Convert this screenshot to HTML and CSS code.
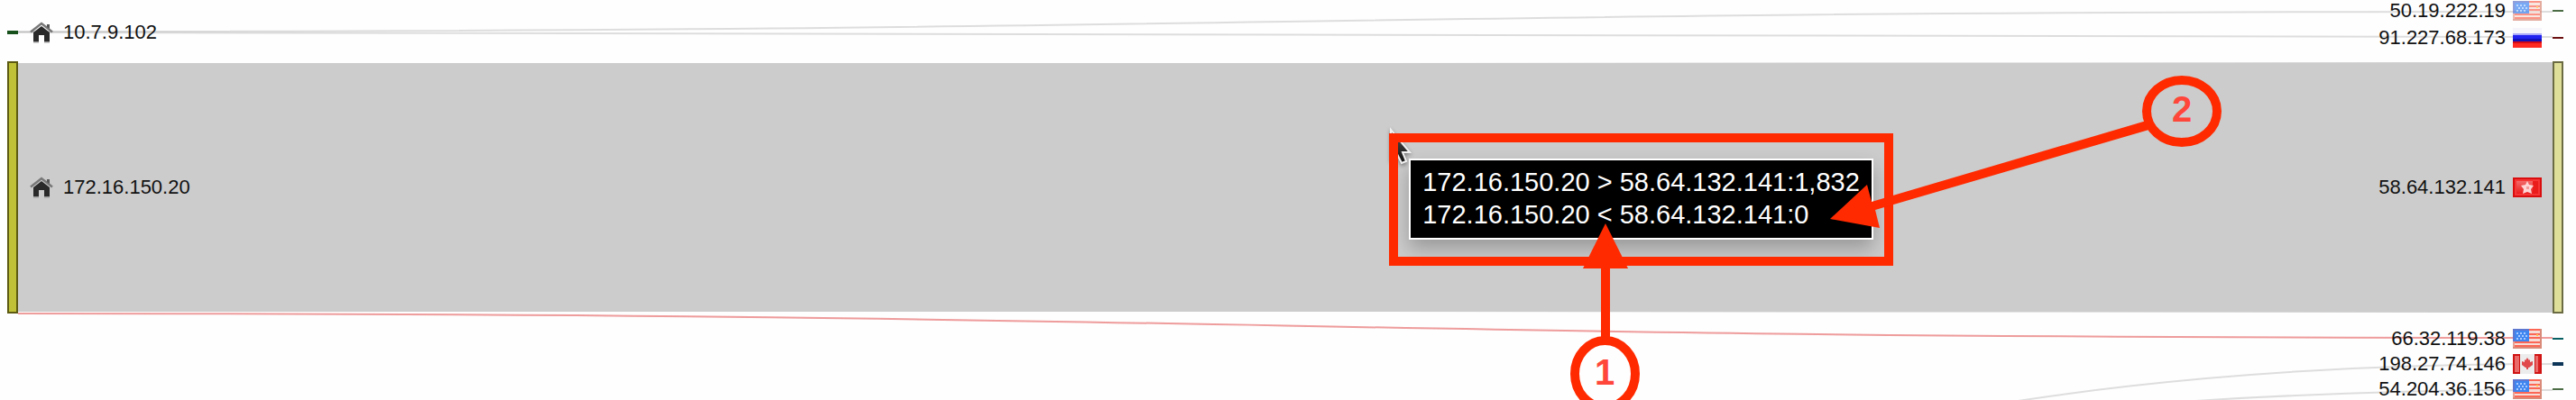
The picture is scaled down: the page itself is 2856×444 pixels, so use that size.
FILE: index.html
```html
<!DOCTYPE html>
<html lang="en">
<head>
<meta charset="utf-8">
<title>Network flows</title>
<link rel="stylesheet" href="styles.css">
</head>
<body>
<svg class="symbols" aria-hidden="true">
  <defs>
    <linearGradient id="gloss" x1="0" y1="0" x2="0" y2="1">
      <stop offset="0" stop-color="#fff" stop-opacity=".35"/>
      <stop offset="1" stop-color="#fff" stop-opacity="0"/>
    </linearGradient>
    <linearGradient id="cursor-fill" x1="0" y1="0" x2="0" y2="1">
      <stop offset="0" stop-color="#555"/>
      <stop offset="1" stop-color="#111"/>
    </linearGradient>
  </defs>
  <symbol id="home" viewBox="0 0 28 24">
    <path d="M2 11.500 L14 2 L26 11.500" fill="none" stroke="#777" stroke-width="2.500"/>
    <path d="M20 3h3v5l-3-2z" fill="#555"/>
    <path d="M5 12 L14 5 L23 12 V23 H17 V15 H11 V23 H5Z" fill="#2a2a2a"/>
    <path d="M5 22h6v1.500H5zM17 22h6v1.500h-6z" fill="#999"/>
  </symbol>
  <symbol id="us" viewBox="0 0 32 22">
    <path d="M0 0h32v22H0z" fill="#f6dcd6"/>
    <path d="M18 0h14v2H18zM18 5h12v2H18zM18 9h12v2H18zM2 14h28v2H2zM0 18h32v4H0z" fill="#fb6655"/>
    <path d="M0 20h32v2H0zM30 0h2v22h-2z" fill="#d98a78"/>
    <path d="M0 14h2v6H0z" fill="#e9a394"/>
    <path d="M0 0h18v14H0z" fill="#5f78cf"/>
    <path d="M2 2h16v12H2z" fill="#3f86f0"/>
    <path d="M4 4h2v2H4zM8 4h2v2H8zM12 4h2v2h-2zM6 7h2v2H6zM10 7h2v2h-2zM14 7h2v2h-2zM4 10h2v2H4zM8 10h2v2H8zM12 10h2v2h-2z" fill="#a9cbff"/>
    <path d="M26 6h2v2h-2z" fill="#ffc04a"/>
  </symbol>
  <symbol id="ru" viewBox="0 0 32 22">
    <path d="M0 0h32v7H0z" fill="#f5f5fb"/>
    <path d="M0 6h32v10H0z" fill="#2222f0"/>
    <path d="M0 6h32v2H0z" fill="#aaaafa"/>
    <path d="M0 12h32v3H0z" fill="#1212b8"/>
    <path d="M0 15h32v7H0z" fill="#ff2b22"/>
    <path d="M0 15h32v2H0z" fill="#d40a18"/>
  </symbol>
  <symbol id="hk" viewBox="0 0 32 22">
    <path d="M0 0h32v22H0z" fill="#d90d0d"/>
    <path d="M2 2h28v18H2z" fill="#f63535"/>
    <path d="M4 4h24v14H4z" fill="#ea1c1c"/>
    <path d="M4 4h18v14H4z" fill="url(#gloss)"/>
    <path d="M16 4l2 4 5 1-3 4 1 5-5-2-5 2 1-5-3-4 5-1z" fill="#ffd5d5"/>
    <path d="M15 10h3v3h-3z" fill="#f49a9a"/>
  </symbol>
  <symbol id="ca" viewBox="0 0 32 22">
    <path d="M0 0h32v22H0z" fill="#ececec"/>
    <path d="M0 0h8v22H0zM24 0h8v22h-8z" fill="#cf1212"/>
    <path d="M2 2h5v18H2zM25 2h5v18h-5z" fill="#ea6a6a"/>
    <path d="M28 2h2v18h-2z" fill="#d92020"/>
    <path d="M16 4l2 3 1-1v3l3-1v4l-4 3h-1v2h-2v-2h-1l-4-3V8l3 1V6l1 1z" fill="#e0484c"/>
  </symbol>
</svg>

<main class="chart">
  <svg class="links" viewBox="0 0 2810 444" preserveAspectRatio="none" aria-hidden="true">
    <path class="link" d="M0 35 C1405 35 1405 13 2810 13"/>
    <path class="link" d="M0 36 C1405 36 1405 41 2810 41"/>
    <path class="band" d="M0 70H1405L2810 69V347L1405 346H0Z"/>
    <path class="link link-alert" d="M0 348 C1405 348 1405 375 2810 375"/>
    <path class="link" d="M0 969 C1405 969 1405 404 2810 404"/>
    <path class="link" d="M0 830 C1405 830 1405 433 2810 433"/>
  </svg>

  <section class="column sources" aria-label="Sources">
    <div class="node"><i class="bar bar-green"></i><svg class="home"><use href="#home"/></svg><span>10.7.9.102</span></div>
    <div class="node node-large"><i class="bar bar-olive"></i><svg class="home"><use href="#home"/></svg><span>172.16.150.20</span></div>
  </section>

  <section class="column targets" aria-label="Destinations">
    <div class="node node-top"><span>50.19.222.19</span><svg class="flag faded"><use href="#us"/></svg><i class="bar bar-moss"></i></div>
    <div class="node node-second"><span>91.227.68.173</span><svg class="flag"><use href="#ru"/></svg><i class="bar bar-maroon"></i></div>
    <div class="node node-large"><span>58.64.132.141</span><svg class="flag"><use href="#hk"/></svg><i class="bar bar-cream"></i></div>
    <div class="node node-after"><span>66.32.119.38</span><svg class="flag"><use href="#us"/></svg><i class="bar bar-teal"></i></div>
    <div class="node node-next"><span>198.27.74.146</span><svg class="flag"><use href="#ca"/></svg><i class="bar bar-navy"></i></div>
    <div class="node node-next"><span>54.204.36.156</span><svg class="flag"><use href="#us"/></svg><i class="bar bar-moss"></i></div>
  </section>

  <div class="tooltip" role="tooltip">
    <div>172.16.150.20 &gt; 58.64.132.141:1,832</div>
    <div>172.16.150.20 &lt; 58.64.132.141:0</div>
  </div>

  <svg class="notes" viewBox="0 0 2856 444">
    <path class="cursor" d="M1542 144V177L1549 171L1554 181L1559 179L1555 169H1563Z"/>
    <path class="mark" d="M1540 148H2099V295H1540ZM1550 158V285H2089V158Z" fill-rule="evenodd"/>
    <path class="mark" d="M1780 248L1805 298H1785V378H1775V298H1755Z"/>
    <path class="mark" d="M2029 243L2070 205L2075 224L2383 133L2386 143L2079 233L2084 253Z"/>
    <ellipse class="ring" cx="1779.500" cy="415" rx="33.500" ry="37"/>
    <ellipse class="ring" cx="2419" cy="123.500" rx="39" ry="34.500"/>
    <text class="number" x="1779" y="427">1</text>
    <text class="number" x="2419" y="135">2</text>
  </svg>
</main>
</body>
</html>
```
FILE: styles.css
```css
body {
  margin: 0;
  background: #fefefe;
  color: #111;
  font: 22px/24px "Liberation Sans", Arial, sans-serif;
}

.symbols {
  position: absolute;
  width: 0;
  height: 0;
}

.chart {
  position: relative;
  display: flex;
  justify-content: space-between;
  padding: 0 14px 0 8px;
  overflow: hidden;
}

.column {
  position: relative;
  display: flex;
  flex-direction: column;
}

.node {
  display: flex;
  align-items: center;
  height: 24px;
}

.node-large { height: 280px; }

.sources { padding-top: 24px; }
.sources .node-large { margin-top: 20px; }

.targets .node { justify-content: flex-end; }
.targets .node-second { margin-top: 6px; }
.targets .node-large { margin-top: 14px; }
.targets .node-after { margin-top: 16px; }
.targets .node-next { margin-top: 4px; }

.bar {
  box-sizing: border-box;
  width: 12px;
  height: 2px;
}

.bar-green { height: 4px; background: #17501a; }
.bar-moss { background: #4b6c45; }
.bar-maroon { background: #6b1010; }
.bar-teal { background: #075e63; }
.bar-navy { height: 4px; background: #0d3558; }

.bar-olive {
  height: 100%;
  border: 2px solid #5c5a12;
  background: #c0c136;
}

.bar-cream {
  height: 100%;
  border: 2px solid #6b6b43;
  background: #dedf98;
}

.home {
  width: 28px;
  height: 24px;
  margin: 0 10px 0 12px;
}

.flag {
  width: 32px;
  height: 22px;
  margin: 0 12px 0 8px;
}

.faded { opacity: 0.7; }

.links {
  position: absolute;
  top: 0;
  left: 20px;
  width: calc(100% - 46px);
  height: 444px;
}

.link {
  fill: none;
  stroke: #000;
  stroke-opacity: 0.13;
  stroke-width: 2;
}

.link-alert {
  stroke: #e03a3a;
  stroke-opacity: 0.5;
}

.band { fill: #ccc; }

.tooltip {
  position: absolute;
  top: 176px;
  left: 54.7%;
  padding: 6px 13px 8px;
  border: 2px solid #fff;
  background: #000;
  box-shadow: 0 10px 20px rgba(0, 0, 0, 0.25);
  color: #fff;
  font-size: 29px;
  line-height: 36px;
  white-space: nowrap;
}

.notes {
  position: absolute;
  top: 0;
  left: 0;
  width: 100%;
}

.cursor {
  fill: url(#cursor-fill);
  stroke: #f2f2f2;
  stroke-width: 2;
  filter: drop-shadow(0 2px 2px rgba(0, 0, 0, 0.4));
}

.mark { fill: #ff2a00; }

.ring {
  fill: none;
  stroke: #ff2a00;
  stroke-width: 10;
}

.number {
  fill: #ff463a;
  font-size: 40px;
  font-weight: bold;
  text-anchor: middle;
}
```
